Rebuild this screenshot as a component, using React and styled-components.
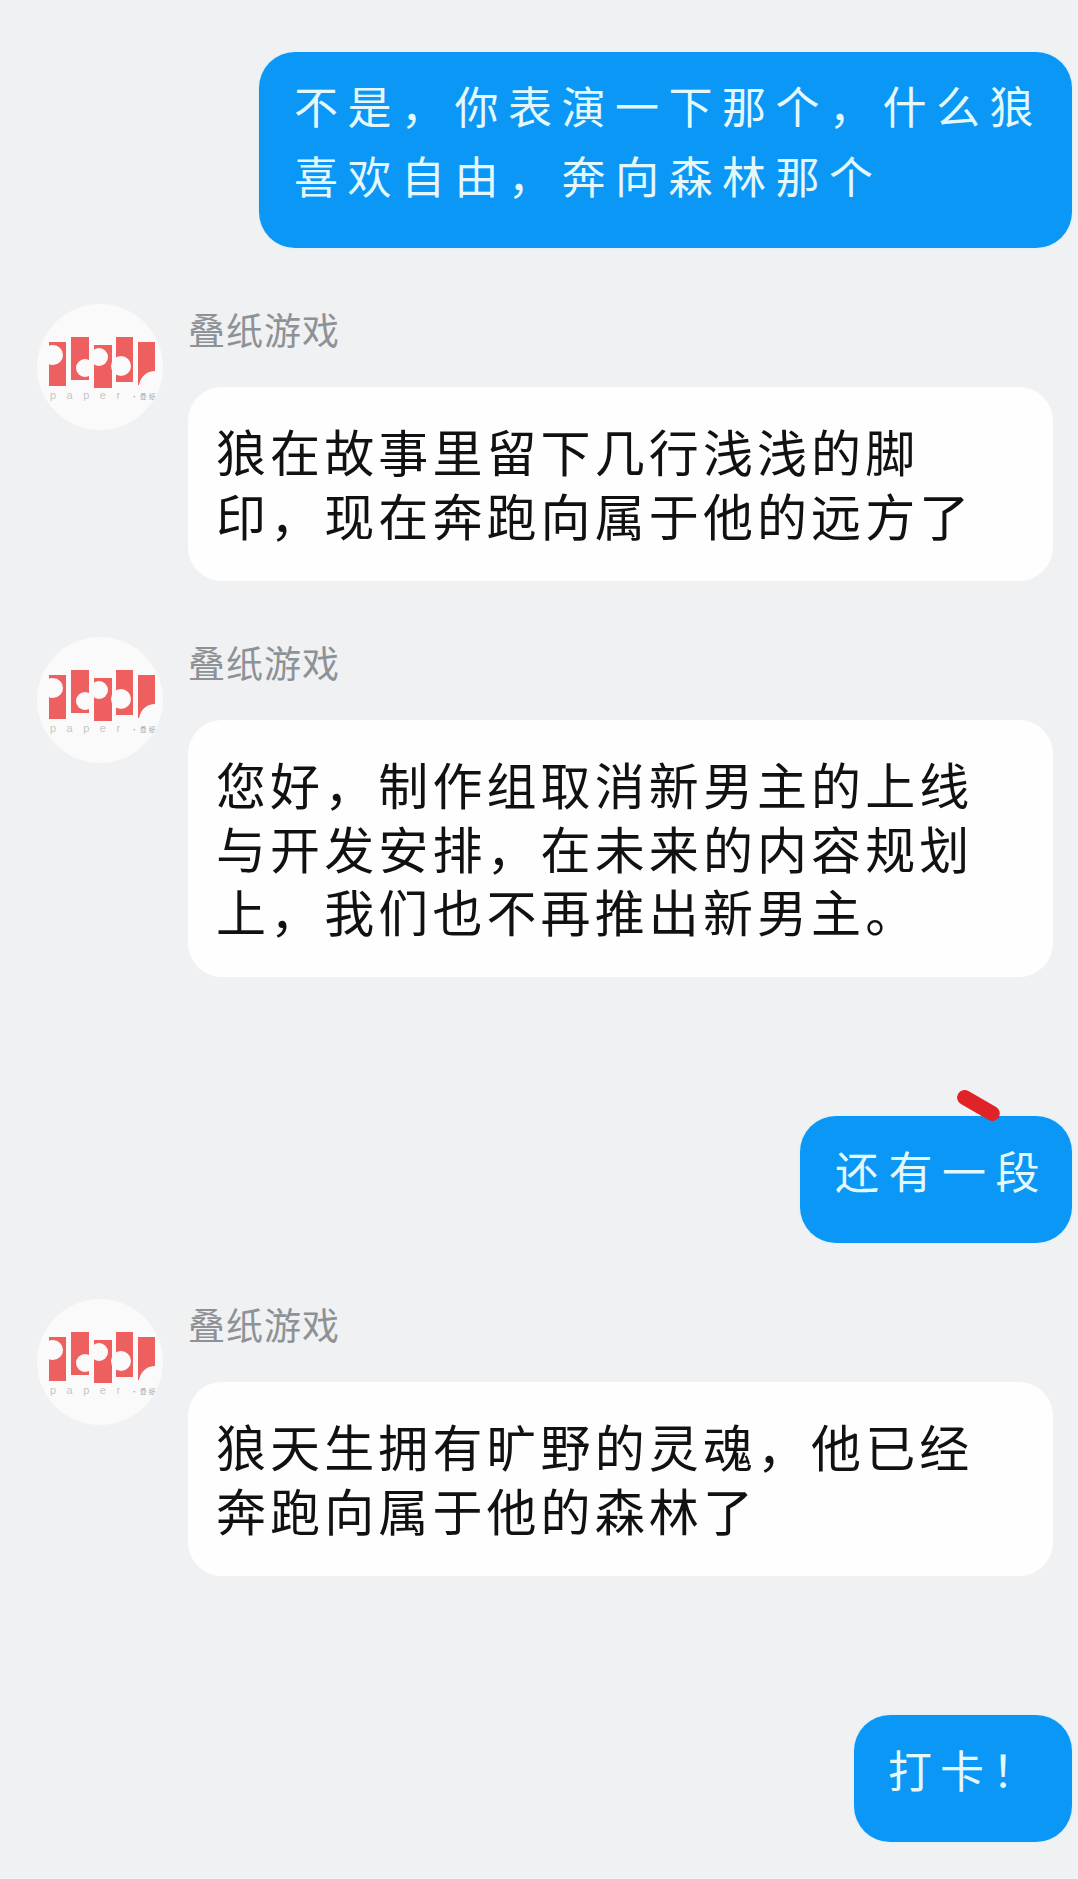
import React from "react";
import styled, { createGlobalStyle } from "styled-components";

const Global = createGlobalStyle`
  html, body { margin: 0; padding: 0; background: #eff1f3; }
`;

const Page = styled.div`
  width: 1078px;
  height: 1879px;
  overflow: hidden;
  background: #eff1f3;
  display: flex;
  flex-direction: column;
  font-family: "Noto Sans CJK SC", "Noto Sans", sans-serif;
  padding-top: 52px;
  box-sizing: border-box;
`;

const SentRow = styled.div`
  display: flex;
  justify-content: flex-end;
  padding-right: 6px;
  margin-top: ${(p) => p.$top || 0}px;
`;

const SentBubble = styled.div`
  position: relative;
  box-sizing: border-box;
  width: ${(p) => p.$width}px;
  height: ${(p) => p.$height}px;
  padding: ${(p) => p.$pad};
  background: #0a97f6;
  border-radius: 36px;
  box-shadow: 0 0 2px #c4effb;
  color: #e4f8fb;
  font-size: 44px;
  font-weight: 400;
  line-height: 70px;
  letter-spacing: ${(p) => p.$spacing || 9.5}px;
  white-space: nowrap;
`;

const Mark = styled.span`
  position: absolute;
  top: -18px;
  left: 155px;
  width: 47px;
  height: 15px;
  border-radius: 8px;
  background: #e02328;
  transform: rotate(30deg);
`;

const ReceivedRow = styled.div`
  display: flex;
  gap: 25px;
  padding-left: 37px;
  margin-top: ${(p) => p.$top}px;
`;

const Avatar = styled.div`
  flex: none;
  width: 126px;
  height: 126px;
  border-radius: 50%;
  background: #fafafa;
  display: flex;
  flex-direction: column;
  padding: 33px 0 0 11px;
  box-sizing: border-box;
  overflow: hidden;
`;

const AvatarLabel = styled.div`
  margin-left: 2px;
  font-family: "Liberation Sans", sans-serif;
  font-size: 11px;
  line-height: 12px;
  letter-spacing: 10.5px;
  color: #c6c6c6;
  white-space: nowrap;
`;

const AvatarLabelCjk = styled.span`
  font-family: "Noto Sans CJK SC", sans-serif;
  font-size: 7px;
  letter-spacing: 2px;
  color: #a8a8a8;
`;

const Column = styled.div`
  width: 865px;
  display: flex;
  flex-direction: column;
`;

const Name = styled.div`
  padding-top: 3px;
  font-size: 37px;
  line-height: 44px;
  letter-spacing: 1px;
  color: #8e9195;
`;

const ReceivedBubble = styled.div`
  margin-top: 36px;
  box-sizing: border-box;
  height: ${(p) => p.$height}px;
  padding: 32px 20px 0 28px;
  background: #fefefe;
  border-radius: 34px;
  color: #101113;
  font-size: 50px;
  line-height: 63.5px;
  letter-spacing: 4.1px;
  white-space: nowrap;
`;

const Logo = () => (
  <svg width="108" height="52" viewBox="0 0 108 52" aria-hidden="true">
    <g fill="#ee5f5f">
      <rect x="1" y="5" width="17" height="44" />
      <rect x="23" y="0" width="18" height="43" />
      <rect x="46" y="8" width="18" height="43" />
      <rect x="68" y="0" width="17" height="45" />
      <path d="M90 5H107V34C99 34 93 39 91 48H90Z" />
    </g>
    <g fill="#fafafa">
      <circle cx="5" cy="18" r="10" />
      <circle cx="37" cy="31" r="9" />
      <circle cx="51" cy="20" r="9" />
      <circle cx="73" cy="29" r="10" />
    </g>
  </svg>
);

const Contact = ({ top, height, lines }) => (
  <ReceivedRow $top={top}>
    <Avatar>
      <Logo />
      <AvatarLabel>
        paper<AvatarLabelCjk>·叠纸</AvatarLabelCjk>
      </AvatarLabel>
    </Avatar>
    <Column>
      <Name>叠纸游戏</Name>
      <ReceivedBubble $height={height}>
        {lines.map((l) => (
          <div key={l}>{l}</div>
        ))}
      </ReceivedBubble>
    </Column>
  </ReceivedRow>
);

export default function App() {
  return (
    <Page>
      <Global />
      <SentRow>
        <SentBubble $width={813} $height={196} $pad="18px 0 0 35px">
          <div>不是，你表演一下那个，什么狼</div>
          <div>喜欢自由，奔向森林那个</div>
        </SentBubble>
      </SentRow>
      <Contact top={56} height={194} lines={["狼在故事里留下几行浅浅的脚", "印，现在奔跑向属于他的远方了"]} />
      <Contact top={56} height={257} lines={["您好，制作组取消新男主的上线", "与开发安排，在未来的内容规划", "上，我们也不再推出新男主。"]} />
      <SentRow $top={139}>
        <SentBubble $width={272} $height={127} $pad="19px 0 0 35px">
          <Mark />
          <div>还有一段</div>
        </SentBubble>
      </SentRow>
      <Contact top={56} height={194} lines={["狼天生拥有旷野的灵魂，他已经", "奔跑向属于他的森林了"]} />
      <SentRow $top={139}>
        <SentBubble $width={218} $height={127} $pad="19px 0 0 34px" $spacing={8}>
          <div>打卡！</div>
        </SentBubble>
      </SentRow>
    </Page>
  );
}
